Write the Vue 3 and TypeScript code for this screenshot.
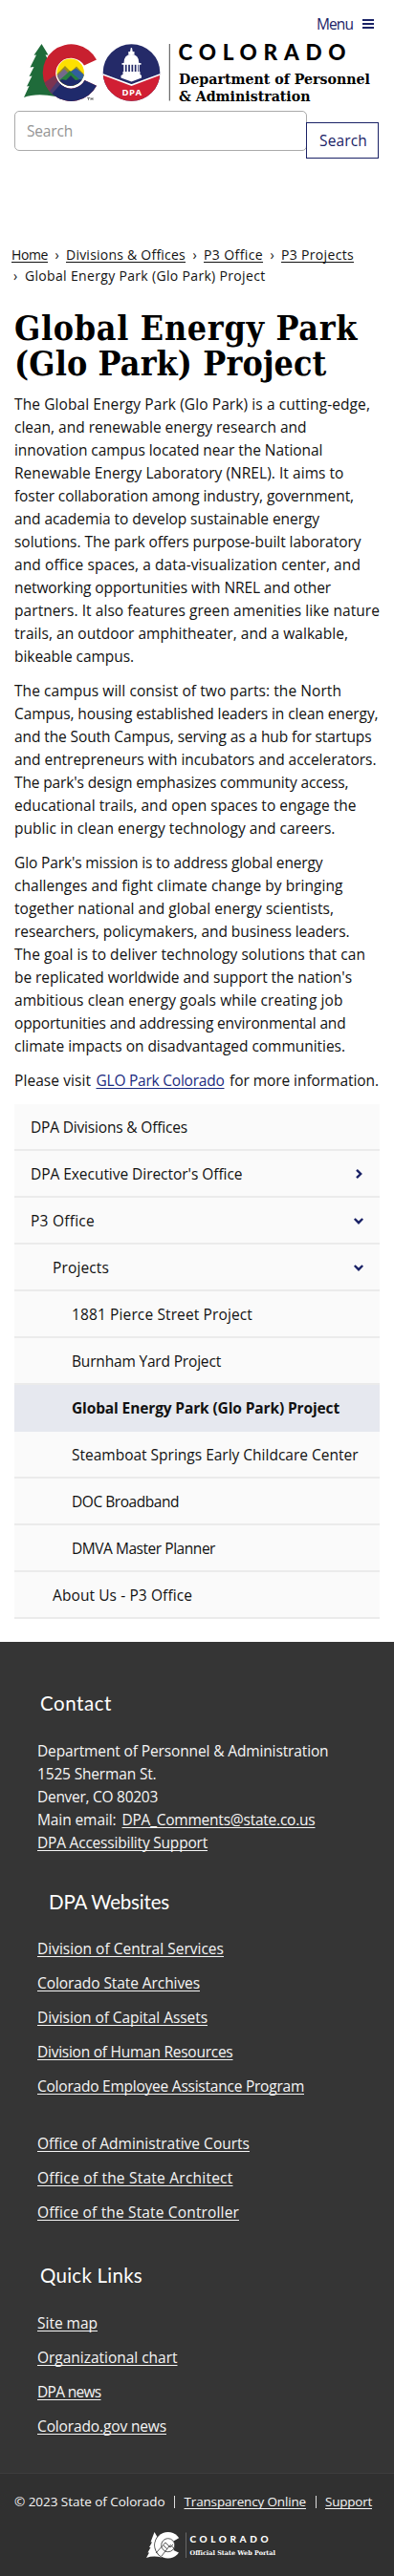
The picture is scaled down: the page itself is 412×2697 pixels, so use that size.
<script setup lang="ts">
import type { Directive } from 'vue'

interface Line { text: string; w: number }
interface NavItem { text: string; w: number; level: number; icon?: 'right' | 'down'; active?: boolean }

// Tracks a run of text so that it sets to the given measure in pixels.
const fit = (el: HTMLElement, w: number) => {
  el.style.letterSpacing = '0px'
  const natural = el.getBoundingClientRect().width
  const count = (el.textContent ?? '').trim().length
  if (count) el.style.letterSpacing = `${((w - natural) / count).toFixed(4)}px`
}
const vFit: Directive<HTMLElement, number> = { mounted: (el, b) => fit(el, b.value) }

const L = (text: string, w: number): Line => ({ text, w })

const crumbs: Line[] = [
  L('Home', 38), L('Divisions & Offices', 125), L('P3 Office', 62), L('P3 Projects', 76),
]

const paragraphs: Line[][] = [
  [
    L('The Global Energy Park (Glo Park) is a cutting-edge,', 372),
    L('clean, and renewable energy research and', 305.5),
    L('innovation campus located near the National', 322.5),
    L('Renewable Energy Laboratory (NREL). It aims to', 344.5),
    L('foster collaboration among industry, government,', 355),
    L('and academia to develop sustainable energy', 319),
    L('solutions. The park offers purpose-built laboratory', 362.5),
    L('and office spaces, a data-visualization center, and', 362),
    L('networking opportunities with NREL and other', 331),
    L('partners. It also features green amenities like nature', 382),
    L('trails, an outdoor amphitheater, and a walkable,', 349),
    L('bikeable campus.', 125),
  ],
  [
    L('The campus will consist of two parts: the North', 342),
    L('Campus, housing established leaders in clean energy,', 380.5),
    L('and the South Campus, serving as a hub for startups', 373.5),
    L('and entrepreneurs with incubators and accelerators.', 378.5),
    L("The park's design emphasizes community access,", 349.5),
    L('educational trails, and open spaces to engage the', 357.5),
    L('public in clean energy technology and careers.', 335.5),
  ],
  [
    L("Glo Park's mission is to address global energy", 322.5),
    L('challenges and fight climate change by bringing', 343.5),
    L('together national and global energy scientists,', 334),
    L('researchers, policymakers, and business leaders.', 350.5),
    L('The goal is to deliver technology solutions that can', 367),
    L("be replicated worldwide and support the nation's", 353),
    L('ambitious clean energy goals while creating job', 343.5),
    L('opportunities and addressing environmental and', 346.5),
    L('climate impacts on disadvantaged communities.', 346),
  ],
]

const nav: NavItem[] = [
  { text: 'DPA Divisions & Offices', w: 164, level: 0 },
  { text: "DPA Executive Director's Office", w: 221.5, level: 0, icon: 'right' },
  { text: 'P3 Office', w: 67, level: 0, icon: 'down' },
  { text: 'Projects', w: 59, level: 1, icon: 'down' },
  { text: '1881 Pierce Street Project', w: 189, level: 2 },
  { text: 'Burnham Yard Project', w: 156, level: 2 },
  { text: 'Global Energy Park (Glo Park) Project', w: 280, level: 2, active: true },
  { text: 'Steamboat Springs Early Childcare Center', w: 299.5, level: 2 },
  { text: 'DOC Broadband', w: 112, level: 2 },
  { text: 'DMVA Master Planner', w: 150, level: 2 },
  { text: 'About Us - P3 Office', w: 146, level: 1 },
]

const address: Line[] = [
  L('Department of Personnel & Administration', 304.5),
  L('1525 Sherman St.', 124.5),
  L('Denver, CO 80203', 126),
]
const divisions: Line[] = [
  L('Division of Central Services', 195), L('Colorado State Archives', 170),
  L('Division of Capital Assets', 178), L('Division of Human Resources', 204.5),
  L('Colorado Employee Assistance Program', 279),
]
const offices: Line[] = [
  L('Office of Administrative Courts', 222), L('Office of the State Architect', 204.5),
  L('Office of the State Controller', 211),
]
const quick: Line[] = [
  L('Site map', 63), L('Organizational chart', 146.5), L('DPA news', 66.5), L('Colorado.gov news', 135),
]
</script>

<template>
  <div class="page">
    <header>
      <div class="menu">
        <span v-fit="38" class="t">Menu</span>
        <span class="bars"><i></i><i></i><i></i></span>
      </div>
      <svg class="logo" viewBox="20 40 372 72" width="372" height="72">
        <defs>
          <clipPath id="sun"><circle cx="73.7" cy="75.7" r="14.2" /></clipPath>
          <clipPath id="seal"><circle cx="137.5" cy="76" r="29.8" /></clipPath>
          <clipPath id="cee">
            <path d="M101 62.5 A29.8 29.8 0 1 0 101 89.8 L88.5 84 A16 16 0 1 1 88 68.5 Z" />
          </clipPath>
        </defs>
        <path fill="#1f6b3a" d="M43.5 46 L50.5 57.5 L47.5 57.5 L53 67 L58 101 Q38 97 25 102 L30.5 90 L28 90.5 L33.5 79.5 L30.5 80 L35.5 70 L31.5 70.5 L38 57.5 L35.5 57.7 Z" />
        <circle cx="73.7" cy="75.7" r="17" fill="#fff" />
        <g clip-path="url(#cee)">
          <rect x="40" y="40" width="70" height="70" fill="#c8202f" />
          <path fill="#7b3452" d="M40 91 L57 79 L66 88 L44 110 L40 110 Z" />
          <path fill="#4b3c70" d="M50 98 L61 84 L70 94 L60 110 L50 110 Z" />
          <path fill="#1f2a6b" d="M52 101 L66 85 L110 73 L110 110 L52 110 Z" />
        </g>
        <g clip-path="url(#sun)">
          <rect x="58" y="60" width="32" height="32" fill="#fde000" />
          <path fill="#9a8d1b" d="M58 79 L68 69 L74 75 L80 69.5 L90 80 V92 H58 Z" />
          <path fill="#74698a" d="M58 81 L67 72 L72 77 L64 86 Z" />
          <path fill="#315f9d" d="M72 76 L79.5 71.5 L90 80 V88 H78 Z" />
          <path fill="#27803f" d="M62 84 L69 78 L73 74 L77 78 L83 83 L74 87 Z" />
          <path fill="#1f2a6b" d="M58 87 L65 83 L69 84 L74 79 L79 84 L84 83 L90 87 V92 H58 Z" />
        </g>
        <path d="M91 102.5h3M92.5 102.5v2.5M95 105v-2.5l1 1.5 1-1.5v2.5" stroke="#333" stroke-width=".6" fill="none" />
        <g clip-path="url(#seal)">
          <rect x="107" y="45" width="61" height="62" fill="#242a68" />
          <path d="M107 78 L137.5 89.5 L168 78 V107 H107 Z" fill="#d11f34" />
          <path d="M107 77.7 L137.5 89 L168 77.7" fill="none" stroke="#fff" stroke-width="1.7" />
        </g>
        <g fill="#fff">
          <path d="M136.8 50 h1.2 l.9 5 h-3 Z" />
          <rect x="134.3" y="54" width="6.2" height="3.5" />
          <path d="M129.5 66 Q129.5 57 137.4 57 Q145.3 57 145.3 66 Z" />
          <rect x="127.5" y="66" width="20" height="1.8" />
          <path d="M129.3 67h1.6v9h-1.6zM132.6 67h1.6v9h-1.6zM135.9 67h1.6v9h-1.6zM139.2 67h1.6v9h-1.6zM142.5 67h1.6v9h-1.6zM144.8 67h1v9h-1z" />
          <path d="M128.5 75 H146.5 V78 L148 79 V81.5 L137.5 85.5 L126.5 81.5 V79 L128.5 78 Z" />
          <text x="127.5" y="100" class="seal-text" textLength="20.5">DPA</text>
        </g>
        <path d="M177.3 46 V105.5" stroke="#4a4a4a" stroke-width="1" />
        <text x="186.5" y="63" class="logo-name" textLength="175">COLORADO</text>
        <text x="187" y="88" class="logo-dept" textLength="200" lengthAdjust="spacingAndGlyphs">Department of Personnel</text>
        <text x="187" y="105.7" class="logo-dept" textLength="137.5" lengthAdjust="spacingAndGlyphs">&amp; Administration</text>
      </svg>
      <div class="search">
        <div class="field"><span v-fit="48" class="t">Search</span></div>
        <div class="button"><span v-fit="50" class="t">Search</span></div>
      </div>
    </header>

    <nav class="crumbs">
      <div class="crumb-row">
        <template v-for="(c, i) in crumbs" :key="c.text">
          <span v-if="i" class="sep">›</span>
          <a v-fit="c.w" class="t">{{ c.text }}</a>
        </template>
      </div>
      <div class="crumb-row last">
        <span class="sep">›</span>
        <span v-fit="251.5" class="t">Global Energy Park (Glo Park) Project</span>
      </div>
    </nav>

    <main>
      <h1>
        <span v-fit="359" class="t">Global Energy Park</span><br>
        <span v-fit="326.5" class="t">(Glo Park) Project</span>
      </h1>
      <p v-for="(p, i) in paragraphs" :key="i">
        <span v-for="l in p" :key="l.text" class="line"><span v-fit="l.w" class="t">{{ l.text }}</span></span>
      </p>
      <p class="visit">
        <span v-fit="80" class="t">Please visit</span>
        <a v-fit="134" class="t">GLO Park Colorado</a>
        <span v-fit="156" class="t">for more information.</span>
      </p>
    </main>

    <ul class="side">
      <li v-for="n in nav" :key="n.text" :class="['lv' + n.level, { active: n.active }]">
        <span v-fit="n.w" class="t">{{ n.text }}</span>
        <svg v-if="n.icon" width="12" height="12" viewBox="0 0 12 12">
          <path :d="n.icon === 'right' ? 'M4 1.8 L8.2 6 L4 10.2' : 'M1.8 4 L6 8.2 L10.2 4'" />
        </svg>
      </li>
    </ul>

    <footer>
      <section class="contact">
        <h2><span v-fit="75" class="t">Contact</span></h2>
        <span v-for="a in address" :key="a.text" class="line"><span v-fit="a.w" class="t">{{ a.text }}</span></span>
        <span class="line mail">
          <span v-fit="82.5" class="t">Main email:</span>
          <a v-fit="202" class="t">DPA_Comments@state.co.us</a>
        </span>
        <span class="line"><a v-fit="178" class="t">DPA Accessibility Support</a></span>
      </section>
      <section class="sites">
        <h2><span v-fit="126" class="t">DPA Websites</span></h2>
        <div class="links"><span v-for="a in divisions" :key="a.text" class="line"><a v-fit="a.w" class="t">{{ a.text }}</a></span></div>
        <div class="links second"><span v-for="a in offices" :key="a.text" class="line"><a v-fit="a.w" class="t">{{ a.text }}</a></span></div>
      </section>
      <section class="quick">
        <h2><span v-fit="107" class="t">Quick Links</span></h2>
        <div class="links"><span v-for="a in quick" :key="a.text" class="line"><a v-fit="a.w" class="t">{{ a.text }}</a></span></div>
      </section>
      <div class="legal">
        <div class="legal-row">
          <span v-fit="157.5" class="t">© 2023 State of Colorado</span>
          <span class="bar"></span>
          <a v-fit="127.5" class="t">Transparency Online</a>
          <span class="bar"></span>
          <a v-fit="49" class="t">Support</a>
        </div>
        <svg class="portal" viewBox="152 2650 140 30" width="140" height="30">
          <path fill="#fff" d="M161.5 2651 L165 2657 L164 2657.5 L166.5 2661 L169 2677.5 Q160 2675.5 153 2678 L156 2672.5 L154.5 2672.5 L157.5 2667 L156 2667 L159 2661.5 L157.5 2661.5 Z" />
          <circle cx="175.7" cy="2664.7" r="14.4" fill="#303030" />
          <circle cx="175.7" cy="2664.7" r="13.7" fill="#fff" />
          <path fill="#303030" d="M190 2655.5 L181.5 2660.5 Q184 2664.5 181.5 2670 L190 2674 Z" />
          <g fill="none" stroke="#303030" stroke-width=".8">
            <circle cx="175.7" cy="2664.7" r="7" />
            <path d="M163 2673 L173 2662 L178 2667 L181 2664 M169 2676 L178 2664.5 L182 2668 M171 2665 L175 2669" />
          </g>
          <path d="M194.5 2651.5 V2678" stroke="#777" stroke-width=".8" />
          <text x="198.5" y="2662" class="portal-name" textLength="82">COLORADO</text>
          <text x="198.5" y="2674.8" class="portal-sub" textLength="89.5" lengthAdjust="spacingAndGlyphs">Official State Web Portal</text>
        </svg>
      </div>
    </footer>
  </div>
</template>

<style>
body { margin: 0; background: #fff; }
</style>

<style scoped>
.page {
  width: 412px;
  height: 2697px;
  overflow: hidden;
  font: 15.5px/24px "Open Sans", "Noto Sans", sans-serif;
  color: #111;
}
.t { display: inline-block; white-space: pre; }
.line { display: block; height: 24px; white-space: nowrap; }
a {
  color: inherit;
  text-decoration: underline;
  text-decoration-thickness: 1px;
  text-underline-offset: 1.5px;
  text-decoration-skip-ink: none;
}
header { height: 256px; }
.menu {
  display: flex;
  align-items: center;
  justify-content: flex-end;
  gap: 10px;
  height: 27px;
  padding: 11px 21px 2px 0;
  color: #1a2266;
}
.bars { display: grid; gap: 2px; width: 12px; }
.bars i { height: 2px; background: #1a2266; }
.logo { display: block; margin-left: 20px; }
.logo-name { font: 900 22.5px Lato, sans-serif; fill: #000; }
.logo-dept { font: bold 14.5px "DejaVu Serif", serif; fill: #000; }
.seal-text { font: bold 9.5px "Open Sans", sans-serif; }
.search { display: flex; padding: 4px 0 0 15px; }
.field {
  box-sizing: border-box;
  width: 306px;
  height: 42px;
  padding: 8px 12px;
  border: 1px solid #aaa;
  border-radius: 5px;
  color: #949494;
}
.button {
  box-sizing: border-box;
  width: 76px;
  height: 38px;
  margin: 12px 0 0 -1px;
  padding: 6px 13px;
  border: 1px solid #1a2266;
  background: #fff;
  color: #1a2266;
}
.crumbs { padding-left: 12px; font-size: 14px; line-height: 22px; }
.crumb-row { display: flex; height: 22px; }
.sep { width: 19px; text-align: center; }
.crumb-row.last { padding-left: 2px; }
.last .sep { width: 12px; text-align: left; }
main { padding: 0 15px; }
h1 {
  margin: 25px 0 12px;
  font: bold 35.5px/37px "DejaVu Serif Condensed", "DejaVu Serif", serif;
  font-stretch: condensed;
  color: #000;
}
p { margin: 0 0 12px; }
.visit { display: flex; gap: 5.5px; margin-bottom: 13px; }
.visit a { color: #1a2a80; }
.side { margin: 0 15px; padding: 0; list-style: none; }
.side li {
  box-sizing: border-box;
  display: flex;
  align-items: center;
  justify-content: space-between;
  height: 49px;
  padding: 0 16px 0 17px;
  border-bottom: 2px solid #ebebeb;
  background: #fafafa;
}
.side li.lv1 { padding-left: 40px; }
.side li.lv2 { padding-left: 60px; }
.side li.active { background: #e6e8ef; border-color: #e6e8ef; font-weight: 700; }
.side path { fill: none; stroke: #1a2266; stroke-width: 2.4; }
footer { margin-top: 24px; background: #353535; color: #f5f5f5; }
footer section { box-sizing: border-box; padding-left: 39px; }
h2 { margin: 0; font: 400 20.5px/28px Lato, sans-serif; color: #fff; }
.contact { height: 256px; padding-top: 50px; }
.contact h2 { padding: 0 0 24px 3px; }
.mail { display: flex; gap: 6px; }
.sites { height: 393px; padding-top: 2px; }
.sites h2 { padding: 0 0 23px 12px; }
.links { display: flex; flex-direction: column; gap: 12px; }
.links.second { margin-top: 36px; }
.quick { height: 221px; }
.quick h2 { padding: 0 0 24px 3px; }
.legal { height: 107px; background: #303030; border-top: 1px solid #3d3d3d; }
.legal-row { display: flex; padding: 17px 0 0 15px; font-size: 13.5px; }
.bar { width: 1px; height: 13px; margin: 6px 9.5px 0; background: #ddd; }
.portal { display: block; margin: 19px 0 0 152px; }
.portal-name { font: 900 10px Lato, sans-serif; fill: #fff; }
.portal-sub { font: bold 6.5px "DejaVu Serif", serif; fill: #fff; }
</style>
